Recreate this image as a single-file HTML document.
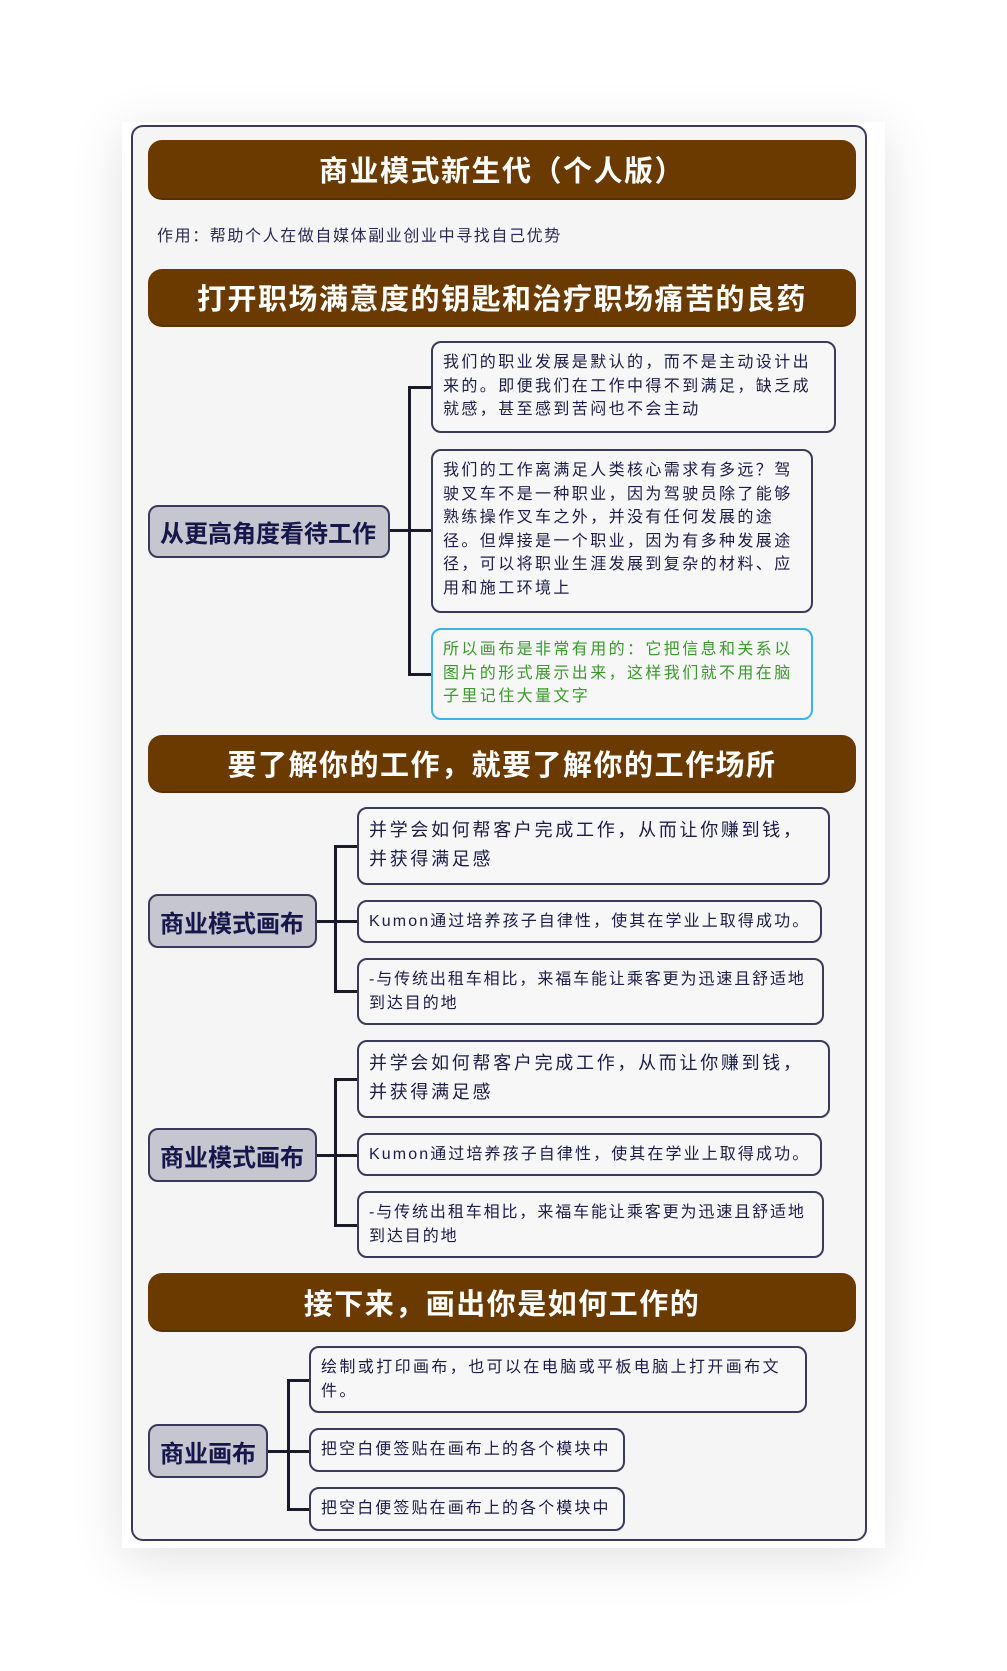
<!DOCTYPE html>
<html><head><meta charset="utf-8"><style>
*{margin:0;padding:0;box-sizing:border-box}
body{width:1007px;height:1671px;background:#fff;position:relative;overflow:hidden;font-family:"Liberation Sans","Noto Sans CJK SC",sans-serif}
.panel{position:absolute;left:122px;top:122px;width:763px;height:1426px;background:#fff;box-shadow:0 10px 50px rgba(0,0,0,0.12)}
.card{position:absolute;left:131px;top:125px;width:736px;height:1416px;background:#f5f5f6;border:2px solid #3a3a5c;border-radius:12px}
.hdr{position:absolute;left:148px;width:708px;background:#6b3a00;border-radius:14px;color:#fff;font-weight:bold;text-align:center;font-size:29px;letter-spacing:1.5px;display:flex;align-items:center;justify-content:center;border-bottom:2px solid #5a3000}
.sub{position:absolute;left:157px;top:222px;font-size:16px;letter-spacing:1.6px;color:#2a2a55}
.node{position:absolute;left:148px;background:#c6c6d0;border:2px solid #3a3a5c;border-radius:10px;color:#16164a;font-weight:bold;font-size:24px;display:flex;align-items:center;padding-left:10px;white-space:nowrap}
.box{position:absolute;background:#f7f7f8;border:2px solid #3a3a5c;border-radius:10px;color:#1c1c4a;font-size:16px;letter-spacing:2.4px;line-height:23.5px;padding:8px 8px 8px 10px}
.big{font-size:18px;letter-spacing:2.7px;line-height:29px;padding:7px 8px 7px 10px}
.nw{white-space:nowrap;letter-spacing:2.1px}
.c{letter-spacing:1.9px;padding-right:4px}
.ln{position:absolute;background:#1a1a2a}
</style></head><body>
<div class="panel"></div>
<div class="card"></div>
<div class="hdr" style="top:140px;height:60px">商业模式新生代（个人版）</div>
<div class="sub">作用：帮助个人在做自媒体副业创业中寻找自己优势</div>
<div class="hdr" style="top:269px;height:58px">打开职场满意度的钥匙和治疗职场痛苦的良药</div>

<div class="node" style="top:505px;width:242px;height:53px">从更高角度看待工作</div>
<div class="ln" style="left:390px;top:529px;width:20px;height:3px"></div>
<div class="ln" style="left:408px;top:386px;width:3px;height:290px"></div>
<div class="ln" style="left:408px;top:386px;width:24px;height:3px"></div>
<div class="ln" style="left:408px;top:529px;width:24px;height:3px"></div>
<div class="ln" style="left:408px;top:673px;width:24px;height:3px"></div>
<div class="box" style="left:431px;top:341px;width:405px;height:92px">我们的职业发展是默认的，而不是主动设计出来的。即便我们在工作中得不到满足，缺乏成就感，甚至感到苦闷也不会主动</div>
<div class="box" style="left:431px;top:449px;width:382px;height:164px">我们的工作离满足人类核心需求有多远？驾驶叉车不是一种职业，因为驾驶员除了能够熟练操作叉车之外，并没有任何发展的途径。但焊接是一个职业，因为有多种发展途径，可以将职业生涯发展到复杂的材料、应用和施工环境上</div>
<div class="box" style="left:431px;top:628px;width:382px;height:92px;border-color:#3ab4e8;color:#3a9a2a">所以画布是非常有用的：它把信息和关系以图片的形式展示出来，这样我们就不用在脑子里记住大量文字</div>

<div class="hdr" style="top:735px;height:58px">要了解你的工作，就要了解你的工作场所</div>

<div class="node" style="top:894px;width:169px;height:54px">商业模式画布</div>
<div class="ln" style="left:317px;top:920px;width:20px;height:3px"></div>
<div class="ln" style="left:334px;top:846px;width:3px;height:146px"></div>
<div class="ln" style="left:334px;top:845px;width:24px;height:3px"></div>
<div class="ln" style="left:334px;top:920px;width:24px;height:3px"></div>
<div class="ln" style="left:334px;top:990px;width:24px;height:3px"></div>
<div class="box big" style="left:357px;top:807px;width:473px;height:78px">并学会如何帮客户完成工作，从而让你赚到钱，并获得满足感</div>
<div class="box nw" style="left:357px;top:900px;width:465px;height:43px;padding-top:8px">Kumon通过培养孩子自律性，使其在学业上取得成功。</div>
<div class="box c" style="left:357px;top:958px;width:467px;height:67px">-与传统出租车相比，来福车能让乘客更为迅速且舒适地到达目的地</div>

<div class="node" style="top:1128px;width:169px;height:54px">商业模式画布</div>
<div class="ln" style="left:317px;top:1154px;width:20px;height:3px"></div>
<div class="ln" style="left:334px;top:1079px;width:3px;height:147px"></div>
<div class="ln" style="left:334px;top:1078px;width:24px;height:3px"></div>
<div class="ln" style="left:334px;top:1154px;width:24px;height:3px"></div>
<div class="ln" style="left:334px;top:1224px;width:24px;height:3px"></div>
<div class="box big" style="left:357px;top:1040px;width:473px;height:78px">并学会如何帮客户完成工作，从而让你赚到钱，并获得满足感</div>
<div class="box nw" style="left:357px;top:1133px;width:465px;height:43px;padding-top:8px">Kumon通过培养孩子自律性，使其在学业上取得成功。</div>
<div class="box c" style="left:357px;top:1191px;width:467px;height:67px">-与传统出租车相比，来福车能让乘客更为迅速且舒适地到达目的地</div>

<div class="hdr" style="top:1273px;height:59px">接下来，画出你是如何工作的</div>

<div class="node" style="top:1424px;width:120px;height:54px">商业画布</div>
<div class="ln" style="left:268px;top:1450px;width:22px;height:3px"></div>
<div class="ln" style="left:287px;top:1380px;width:3px;height:130px"></div>
<div class="ln" style="left:287px;top:1379px;width:23px;height:3px"></div>
<div class="ln" style="left:287px;top:1450px;width:23px;height:3px"></div>
<div class="ln" style="left:287px;top:1508px;width:23px;height:3px"></div>
<div class="box" style="left:309px;top:1346px;width:498px;height:67px">绘制或打印画布，也可以在电脑或平板电脑上打开画布文件。</div>
<div class="box nw" style="left:309px;top:1428px;width:316px;height:44px">把空白便签贴在画布上的各个模块中</div>
<div class="box nw" style="left:309px;top:1487px;width:316px;height:44px">把空白便签贴在画布上的各个模块中</div>
</body></html>
